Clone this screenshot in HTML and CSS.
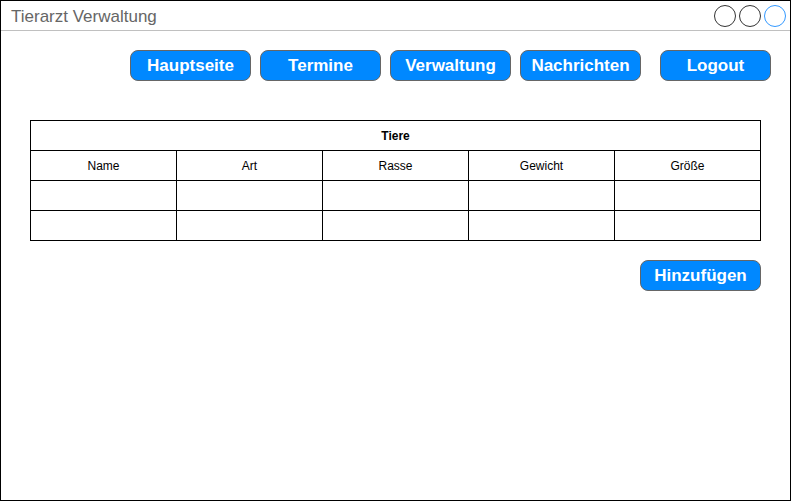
FILE: index.html
```html
<!DOCTYPE html>
<html lang="de">
<head>
<meta charset="utf-8">
<title>Tierarzt Verwaltung</title>
<link rel="stylesheet" href="styles.css">
</head>
<body>
<div class="window">
  <div class="titlebar">
    <span class="title">Tierarzt Verwaltung</span>
    <div class="controls">
      <span class="dot"></span>
      <span class="dot"></span>
      <span class="dot dot-blue"></span>
    </div>
  </div>
  <nav class="nav">
    <button class="btn">Hauptseite</button>
    <button class="btn">Termine</button>
    <button class="btn">Verwaltung</button>
    <button class="btn">Nachrichten</button>
    <button class="btn btn-logout">Logout</button>
  </nav>
  <div class="content">
    <table class="tiere">
      <tr><th colspan="5">Tiere</th></tr>
      <tr><td>Name</td><td>Art</td><td>Rasse</td><td>Gewicht</td><td>Größe</td></tr>
      <tr><td></td><td></td><td></td><td></td><td></td></tr>
      <tr><td></td><td></td><td></td><td></td><td></td></tr>
    </table>
    <div class="actions">
      <button class="btn">Hinzufügen</button>
    </div>
  </div>
</div>
</body>
</html>
```
FILE: styles.css
```css
* { box-sizing: border-box; }
html, body { margin: 0; padding: 0; background: #fff; }
body { font-family: "Liberation Sans", Arial, sans-serif; }
.window {
  width: 791px;
  height: 501px;
  border: 1px solid #000;
}
.titlebar {
  height: 30px;
  border-bottom: 1px solid #c0c0c0;
  display: flex;
  align-items: center;
  justify-content: space-between;
  padding: 0 4px 0 10px;
}
.title {
  font-size: 17px;
  color: #666;
  line-height: 30px;
  padding-top: 2px;
}
.controls { display: flex; gap: 3px; padding-top: 0; }
.dot {
  width: 22px;
  height: 22px;
  border: 1px solid #333;
  border-radius: 50%;
}
.dot-blue { border-color: #3399ff; }
.nav {
  display: flex;
  justify-content: flex-end;
  gap: 9px;
  padding: 19px 19px 0 0;
}
.btn {
  width: 121px;
  height: 31px;
  background: #0088ff;
  border: 1px solid #666;
  border-radius: 8px;
  color: #fff;
  font-family: "Liberation Sans", Arial, sans-serif;
  font-weight: bold;
  font-size: 17px;
  padding: 1px 0 0 0;
  line-height: 28px;
}
.btn-logout { width: 111px; margin-left: 10px; }
.content { padding: 39px 0 0 29px; width: 760px; }
.tiere {
  border-collapse: collapse;
  width: 731px;
  table-layout: fixed;
}
.tiere th, .tiere td {
  border: 1px solid #000;
  height: 30px;
  padding: 0;
  text-align: center;
  font-size: 12px;
  color: #000;
}
.tiere th { font-weight: bold; }
.actions {
  display: flex;
  justify-content: flex-end;
  padding: 19px 0 0 0;
}
```
